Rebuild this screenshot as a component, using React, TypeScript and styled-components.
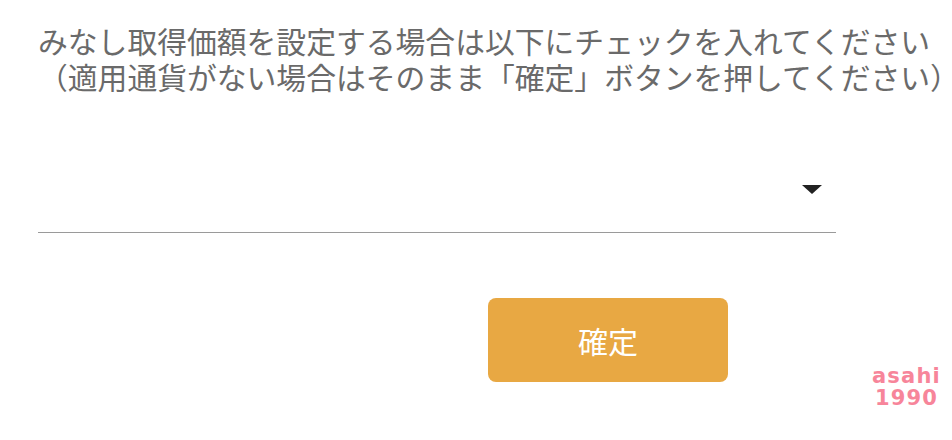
import React from 'react';
import styled, { createGlobalStyle } from 'styled-components';

const GlobalStyle = createGlobalStyle`
  html, body {
    margin: 0;
    padding: 0;
    background: #fff;
    overflow: hidden;
  }
  body {
    font-family: "Noto Sans CJK JP", "Noto Sans", sans-serif;
  }
`;

const Page = styled.div`
  position: relative;
  width: 952px;
  height: 440px;
  padding: 22px 0 0 38px;
  box-sizing: border-box;
`;

const Notice = styled.p`
  margin: 0;
  font-size: 29.8px;
  line-height: 36px;
  color: #6a6a6a;
  white-space: nowrap;
`;

const SelectBox = styled.div`
  margin-top: 53px;
  width: 798px;
  height: 86px;
  border-bottom: 1.5px solid #9a9a9a;
  display: flex;
  align-items: center;
  justify-content: flex-end;
  padding-right: 14px;
  box-sizing: border-box;
`;

const Caret = styled.span`
  width: 0;
  height: 0;
  border-left: 10px solid transparent;
  border-right: 10px solid transparent;
  border-top: 9px solid #222;
`;

const Actions = styled.div`
  width: 798px;
  display: flex;
  padding-left: 450px;
  box-sizing: border-box;
  margin-top: 65px;
`;

const ConfirmButton = styled.button`
  width: 240px;
  height: 84px;
  border: none;
  border-radius: 8px;
  background: #e8a843;
  color: #fff;
  font-family: "Noto Sans CJK JP", sans-serif;
  font-size: 30px;
  padding: 0;
`;

const Watermark = styled.div`
  position: absolute;
  right: 11px;
  bottom: 31px;
  font-family: "DejaVu Sans", "Liberation Sans", sans-serif;
  font-weight: bold;
  font-size: 21px;
  line-height: 22px;
  letter-spacing: 1.2px;
  color: #f7859a;
  text-align: center;
`;

export default function App() {
  return (
    <>
      <GlobalStyle />
      <Page>
        <Notice>みなし取得価額を設定する場合は以下にチェックを入れてください</Notice>
        <Notice>（適用通貨がない場合はそのまま「確定」ボタンを押してください）</Notice>
        <SelectBox>
          <Caret />
        </SelectBox>
        <Actions>
          <ConfirmButton>確定</ConfirmButton>
        </Actions>
        <Watermark>
          asahi
          <br />
          1990
        </Watermark>
      </Page>
    </>
  );
}
